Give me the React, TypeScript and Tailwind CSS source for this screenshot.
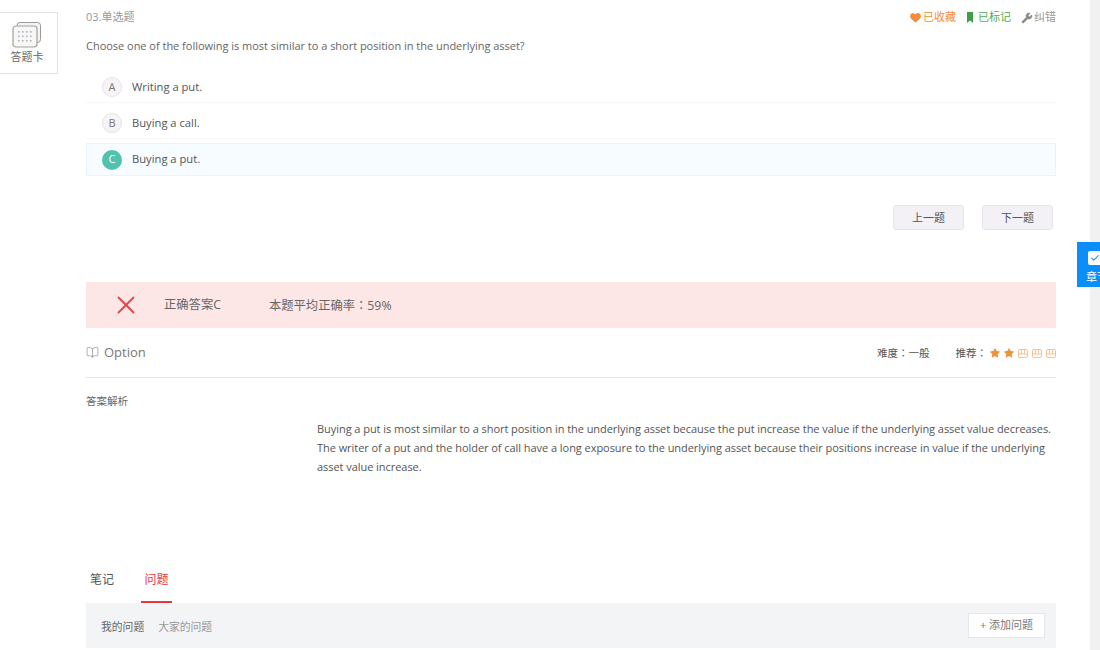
import { Heart, Wrench, X, BookOpen, Star, Check } from "lucide-react";

const font = { fontFamily: '"Open Sans", "Noto Sans CJK SC", sans-serif' };

const options = [
  { key: "A", text: "Writing a put." },
  { key: "B", text: "Buying a call." },
];

const CardIcon = () => (
  <svg width="30" height="26" viewBox="0 0 30 26" fill="none">
    <rect x="5" y="0.5" width="23.5" height="20" rx="3" fill="#f4f4f4" stroke="#9a9a9a" strokeWidth="1" />
    <rect x="1" y="4" width="24" height="21" rx="3" fill="#f7f7f7" stroke="#a89f98" strokeWidth="1.2" />
    {[9, 13.5, 18].map((y) =>
      [6, 10, 14, 18].map((x) => <rect key={`${x}-${y}`} x={x} y={y} width="1.6" height="1.6" fill="#b5b5b5" />)
    )}
  </svg>
);

const EmptyStar = () => (
  <svg width="10" height="9" viewBox="0 0 10 9" fill="none" stroke="#f7b27a" strokeWidth="0.8">
    <rect x="0.5" y="0.5" width="9" height="8" rx="1.5" />
    <path d="M0.5 5H9.5M3.5 0.5V5M6.5 0.5V5" />
  </svg>
);

const FullStar = () => (
  <span className="flex w-[10px] justify-center">
    <Star size={12} fill="#f0923a" strokeWidth={0} className="shrink-0" />
  </span>
);

const Colon = () => <span style={{ fontFamily: '"Noto Sans CJK TC", sans-serif' }}>：</span>;

export default function App() {
  return (
    <div style={font} className="relative h-[650px] w-[1100px] overflow-hidden bg-white text-[#666]">
      <div className="absolute left-0 top-[12px] flex h-[62px] w-[58px] flex-col items-center border border-l-0 border-[#e4e4e4] bg-white pr-[3px] pt-[9px]">
        <CardIcon />
        <span className="mt-[2px] text-[11px] leading-[14px] text-[#666]">答题卡</span>
      </div>

      <div className="absolute right-0 top-[242px] flex h-[45px] w-[23px] flex-col overflow-hidden bg-[#0b8ef8] pl-[9px] pt-[9px]">
        <div className="ml-[2px] flex h-[14px] w-[20px] shrink-0 items-center rounded-[2px] bg-white pl-[2px]">
          <Check size={10} strokeWidth={2.5} className="text-[#0b8ef8]" />
        </div>
        <span className="mt-[4px] w-[30px] text-[11px] leading-[16px] text-white">章节</span>
      </div>

      <div className="flex h-full">
        <main className="ml-[86px] w-[970px]">
          <div className="flex h-[35px] items-center justify-between">
            <span className="text-[11px] text-[#999]">03.单选题</span>
            <div className="flex items-center text-[11px]">
              <span className="flex items-center gap-[1px] text-[#f58b3c]">
                <Heart size={13} fill="#f58b3c" strokeWidth={0} />
                已收藏
              </span>
              <span className="ml-[11px] flex items-center gap-[5px] text-[#4caf50]">
                <svg width="6" height="11" viewBox="0 0 6 11">
                  <path d="M0 0H6V11L3 8.5L0 11Z" fill="#3f9f48" />
                </svg>
                已标记
              </span>
              <span className="ml-[10px] flex items-center gap-[1px] text-[#999]">
                <Wrench size={12} fill="#888" strokeWidth={1} className="text-[#888]" />
                纠错
              </span>
            </div>
          </div>
          <p className="flex h-[22px] items-center text-[11px] tracking-[-0.02px] text-[#666]">
            Choose one of the following is most similar to a short position in the underlying asset?
          </p>

          <div className="mt-[14px]">
            {options.map((o) => (
              <div key={o.key} className="mb-[4px] flex h-[32px] items-center border-b border-[#f7f7f7] pl-[16px] pt-[1px]">
                <span className="flex h-[20px] w-[20px] items-center justify-center rounded-full border border-[#e6e3e8] bg-[#f6f4f7] text-[11px] text-[#777]">
                  {o.key}
                </span>
                <span className="ml-[10px] text-[11.2px] text-[#555]">{o.text}</span>
              </div>
            ))}
            <div className="flex h-[33px] items-center border border-[#e8f3fa] bg-[#f6fcff] pl-[15px]">
              <span className="flex h-[20px] w-[20px] items-center justify-center rounded-full bg-[#50c2ad] text-[11px] text-white">
                C
              </span>
              <span className="ml-[10px] text-[11.2px] text-[#555]">Buying a put.</span>
            </div>
          </div>

          <div className="mt-[29px] flex justify-end gap-[18px] pr-[3px]">
            <button className="h-[25px] w-[71px] rounded-[3px] border border-[#e6e6ea] bg-[#f3f1f5] pt-[1px] text-[11px] text-[#555]">上一题</button>
            <button className="h-[25px] w-[71px] rounded-[3px] border border-[#e6e6ea] bg-[#f3f1f5] pt-[1px] text-[11px] text-[#555]">下一题</button>
          </div>

          <div className="mt-[52px] flex h-[46px] items-center bg-[#fde6e6] pl-[25px]">
            <X size={30} strokeWidth={1.5} className="-mt-[1px] text-[#e2474c]" />
            <span className="ml-[23px] pt-[1px] text-[12.3px] text-[#666]">正确答案C</span>
            <span className="ml-[48px] pt-[1px] text-[12.3px] text-[#666]">本题平均正确率<Colon />59%</span>
          </div>

          <div className="flex h-[50px] items-center justify-between border-b border-[#e6e6e6]">
            <div className="flex items-center gap-[5px]">
              <BookOpen size={13} strokeWidth={1.2} className="text-[#888]" />
              <span className="text-[13px] text-[#777]">Option</span>
            </div>
            <div className="flex items-center pt-[1px] text-[10.5px] text-[#555]">
              <span>难度<Colon />一般</span>
              <span className="ml-[26px]">推荐<Colon /></span>
              <span className="ml-[3px] flex items-center gap-[4px]">
                <FullStar />
                <FullStar />
                <EmptyStar />
                <EmptyStar />
                <EmptyStar />
              </span>
            </div>
          </div>

          <p className="mt-[16px] text-[10.5px] leading-[14px] text-[#666]">答案解析</p>

          <div className="mt-[11px] pl-[231px] text-[11px] leading-[19px] tracking-[-0.05px] text-[#555]">
            Buying a put is most similar to a short position in the underlying asset because the put increase the value if the underlying asset value decreases. The writer of a put and the holder of call have a long exposure to the underlying asset because their positions increase in value if the underlying asset value increase.
          </div>

          <div className="mt-[94px] flex h-[33px] items-start text-[12px]">
            <span className="ml-[4px] leading-[20px] text-[#555]">笔记</span>
            <span className="ml-[27px] flex h-[33px] w-[31px] justify-center border-b-2 border-[#e8373d] leading-[20px] text-[#e8373d]">问题</span>
          </div>
          <div className="flex h-[45px] items-center justify-between bg-[#f3f4f6] pl-[15px] pr-[11px] text-[11px]">
            <div className="flex gap-[14px] pt-[3px] text-[10.8px]">
              <span className="text-[#666]">我的问题</span>
              <span className="text-[#999]">大家的问题</span>
            </div>
            <button className="h-[25px] w-[77px] border border-[#e4e6ea] bg-white text-[11px] text-[#777]">+ 添加问题</button>
          </div>
        </main>
        <div className="ml-auto h-full w-[10px] bg-[#f1f1f1]" />
      </div>
    </div>
  );
}
